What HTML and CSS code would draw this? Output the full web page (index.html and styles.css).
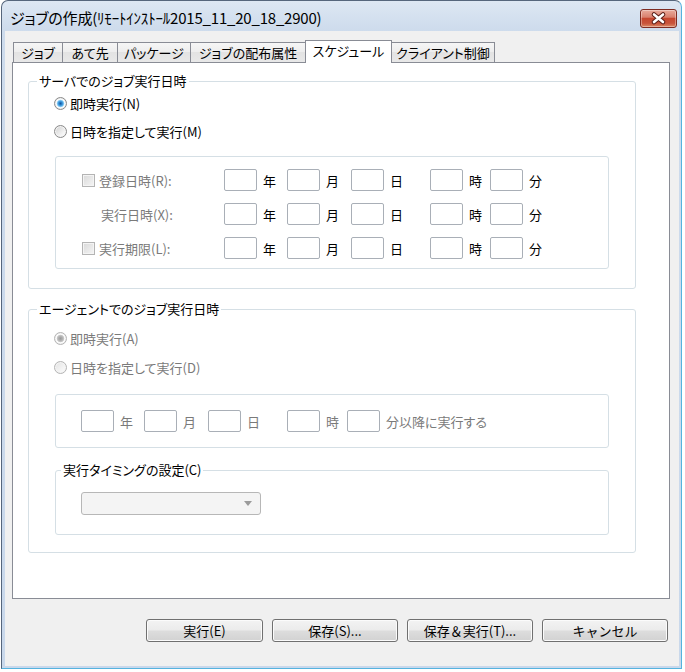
FILE: index.html
```html
<!DOCTYPE html>
<html lang="ja">
<head>
<meta charset="utf-8">
<title>ジョブの作成</title>
<link rel="stylesheet" href="styles.css">
</head>
<body>
<div class="window">
  <div class="titlebar">
    <span class="title">ジョブの作成(ﾘﾓｰﾄｲﾝｽﾄｰﾙ2015_11_20_18_2900)</span>
    <span class="close">
      <svg width="37" height="19" viewBox="0 0 37 19">
        <path d="M14 5.5 L23 13 M23 5.5 L14 13" stroke="#5a1d16" stroke-width="4.6" stroke-linecap="round"/>
        <path d="M14 5.5 L23 13 M23 5.5 L14 13" stroke="#ffffff" stroke-width="2.6" stroke-linecap="round"/>
      </svg>
    </span>
  </div>
  <div class="client">
    <div class="tabs">
      <div class="tab t1">ジョブ</div>
      <div class="tab t2">あて先</div>
      <div class="tab t3">パッケージ</div>
      <div class="tab t4">ジョブの配布属性</div>
      <div class="tab t5 sel">スケジュール</div>
      <div class="tab t6">クライアント制御</div>
    </div>
    <div class="panel">
      <fieldset class="group g1">
        <legend>サーバでのジョブ実行日時</legend>
        <div class="opt first"><span class="radio on"></span><span>即時実行(N)</span></div>
        <div class="opt second"><span class="radio"></span><span>日時を指定して実行(M)</span></div>
        <div class="box box1">
          <div class="dt with-label">
            <span class="rowlabel"><span class="check"></span>登録日時(R):</span>
            <span class="fld"></span><span class="unit">年</span>
            <span class="fld"></span><span class="unit">月</span>
            <span class="fld"></span><span class="unit">日</span>
            <span class="fld"></span><span class="unit">時</span>
            <span class="fld"></span><span class="unit">分</span>

            <span class="rowlabel indent">実行日時(X):</span>
            <span class="fld"></span><span class="unit">年</span>
            <span class="fld"></span><span class="unit">月</span>
            <span class="fld"></span><span class="unit">日</span>
            <span class="fld"></span><span class="unit">時</span>
            <span class="fld"></span><span class="unit">分</span>

            <span class="rowlabel"><span class="check"></span>実行期限(L):</span>
            <span class="fld"></span><span class="unit">年</span>
            <span class="fld"></span><span class="unit">月</span>
            <span class="fld"></span><span class="unit">日</span>
            <span class="fld"></span><span class="unit">時</span>
            <span class="fld"></span><span class="unit">分</span>
          </div>
        </div>
      </fieldset>

      <fieldset class="group g2">
        <legend>エージェントでのジョブ実行日時</legend>
        <div class="opt first dis"><span class="radio on"></span><span>即時実行(A)</span></div>
        <div class="opt second dis"><span class="radio"></span><span>日時を指定して実行(D)</span></div>
        <div class="box box2">
          <div class="dt">
            <span class="fld"></span><span class="unit dis">年</span>
            <span class="fld"></span><span class="unit dis">月</span>
            <span class="fld"></span><span class="unit dis">日</span>
            <span class="fld"></span><span class="unit dis">時</span>
            <span class="fld"></span><span class="unit dis">分以降に実行する</span>
          </div>
        </div>
        <fieldset class="group g3">
          <legend>実行タイミングの設定(C)</legend>
          <div class="combo">
            <svg width="8" height="5" viewBox="0 0 8 5"><path d="M0 0 H8 L4 5 Z" fill="#9b9b9b"/></svg>
          </div>
        </fieldset>
      </fieldset>
    </div>
    <div class="buttons">
      <button class="btn narrow">実行(E)</button>
      <button class="btn">保存(S)...</button>
      <button class="btn">保存＆実行(T)...</button>
      <button class="btn">キャンセル</button>
    </div>
  </div>
</div>
</body>
</html>
```

FILE: styles.css
```css
* {
  box-sizing: border-box;
}

body {
  margin: 0;
  background: #ffffff;
  font-family: "Noto Sans CJK JP", "Noto Sans", sans-serif;
  font-size: 13px;
  color: #000;
  font-feature-settings: "palt";
}

.window {
  margin-left: 1px;
  width: 681px;
  height: 669px;
  border: 1px solid #56667c;
  border-right-color: #55b3df;
  border-bottom-color: #55b3df;
  border-radius: 7px 7px 0 0;
  background: linear-gradient(#dde7f3, #cddbec 30px, #c9d8eb);
  display: flex;
  flex-direction: column;
}

.titlebar {
  height: 30px;
  flex: none;
  display: flex;
  justify-content: space-between;
  align-items: flex-start;
  padding: 0 4px 0 8px;
}

.title {
  font-size: 15px;
  line-height: 20px;
  margin-top: 7px;
  letter-spacing: -0.2px;
}

.close {
  margin-top: 8px;
  width: 37px;
  height: 19px;
  border: 1px solid #7d2c22;
  border-radius: 3px;
  background: linear-gradient(#e9ab9c, #d9806d 42%, #c6472f 50%, #c8533a 78%, #dc8a66);
  box-shadow: inset 0 0 0 1px rgba(255, 255, 255, 0.35);
  display: flex;
}

.close svg {
  margin: -1px;
}

.client {
  flex: 1;
  margin: 0 2px 2px 3px;
  background: #f0f0f0;
  padding: 9px 9px 0 7px;
}

.tabs {
  display: flex;
  align-items: flex-end;
  height: 23px;
  margin-bottom: -1px;
  padding-left: 1px;
  position: relative;
  z-index: 1;
}

.tab {
  height: 21px;
  border: 1px solid #898c95;
  margin-left: -1px;
  background: linear-gradient(#f6f6f6, #ededed 50%, #e3e3e3 50%, #e8e8e8);
  display: flex;
  align-items: center;
  justify-content: center;
  line-height: 1;
  padding-bottom: 1px;
  white-space: nowrap;
}

.tab.t1 { margin-left: 0; width: 50px; }
.tab.t2 { width: 56px; }
.tab.t3 { width: 74px; }
.tab.t4 { width: 116px; }
.tab.t5 { width: 87px; }
.tab.t6 { width: 104px; }

.tab.sel {
  height: 23px;
  background: #ffffff;
  border-bottom: none;
  padding-bottom: 4px;
  position: relative;
  z-index: 2;
}

.panel {
  height: 537px;
  border: 1px solid #898c95;
  background: #ffffff;
}

.group {
  border: 1px solid #d5dfe5;
  border-radius: 3px;
  padding: 0 0 19px 0;
  min-width: 0;
}

.group legend {
  padding: 0 2px;
  line-height: 18px;
  margin-left: 8px;
}

.g1 {
  margin: 9px 33px 0 15px;
}

.g2 {
  margin: 11px 33px 0 15px;
  padding-bottom: 17px;
}

.g3 {
  margin: 13px 26px 0 26px;
  padding-bottom: 19px;
}

.g3 legend {
  margin-left: 5px;
}

.opt {
  display: flex;
  align-items: center;
  height: 20px;
  margin-left: 25px;
  gap: 3px;
}

.g1 .opt.first { margin-top: 3px; }
.g1 .opt.second { margin-top: 8px; }
.g2 .opt.first { margin-top: 10px; }
.g2 .opt.second { margin-top: 9px; }

.opt.dis {
  color: #7a7a7a;
}

.radio {
  width: 13px;
  height: 13px;
  flex: none;
  border-radius: 50%;
  border: 1px solid #8a8a8a;
  background: linear-gradient(135deg, #cfcfcf, #f7f7f7 75%);
  box-shadow: inset 0 0 0 1px #f4f4f4;
}

.radio.on {
  background: radial-gradient(circle, #16559a 0, #2c86d0 1.6px, #5fb4ea 2.8px, #a6d8f6 3.5px, #ffffff 4.2px, #e7e7e7 5.5px);
  box-shadow: none;
}

.opt.dis .radio {
  border-color: #b4b4b4;
  background: linear-gradient(135deg, #e2e2e2, #f7f7f7 75%);
}

.opt.dis .radio.on {
  background: radial-gradient(circle, #9a9a9a 0, #b0b0b0 2px, #c9c9c9 3.4px, #ffffff 4.2px, #ececec 5.5px);
}

.box {
  border: 1px solid #d5dfe5;
  border-radius: 3px;
  margin: 0 26px 0 26px;
}

.box1 {
  margin-top: 15px;
  padding: 12px 0 9px 26px;
}

.box2 {
  margin-top: 17px;
  padding: 15px 0 15px 25px;
}

.dt {
  display: grid;
  grid-template-columns: 33px 30px 33px 31px 33px 46px 33px 27px 33px auto;
  row-gap: 12px;
  align-items: center;
}

.dt.with-label {
  grid-template-columns: 142px 33px 30px 33px 31px 33px 46px 33px 27px 33px auto;
}

.rowlabel {
  display: flex;
  align-items: center;
  gap: 4px;
  color: #7a7a7a;
}

.rowlabel.indent {
  padding-left: 19px;
}

.check {
  width: 13px;
  height: 13px;
  flex: none;
  border: 1px solid #b4b4b4;
  background: linear-gradient(135deg, #d9d9d9, #f5f5f5);
  box-shadow: inset 0 0 0 1px #f4f4f4;
}

.fld {
  height: 22px;
  border: 1px solid #a9afb7;
  border-radius: 2px;
  background: #ffffff;
}

.unit {
  padding-left: 6px;
  white-space: nowrap;
}

.unit.dis {
  color: #7a7a7a;
}

.combo {
  margin: 13px 0 0 25px;
  width: 180px;
  height: 23px;
  border: 1px solid #b7b7b7;
  border-radius: 3px;
  background: #f4f4f4;
  display: flex;
  align-items: center;
  justify-content: flex-end;
  padding-right: 8px;
}

.buttons {
  display: flex;
  justify-content: flex-end;
  gap: 9px;
  margin-top: 20px;
  padding-right: 2px;
}

.btn {
  width: 126px;
  height: 23px;
  border: 1px solid #707070;
  border-radius: 3px;
  background: linear-gradient(#f3f3f3, #ebebeb 48%, #dddddd 52%, #d2d2d2);
  box-shadow: inset 0 0 0 1px #fbfbfb;
  font-family: inherit;
  font-size: 13px;
  font-feature-settings: normal;
  color: #000;
  padding: 0 0 1px 0;
}

.btn.narrow {
  width: 117px;
}
```
